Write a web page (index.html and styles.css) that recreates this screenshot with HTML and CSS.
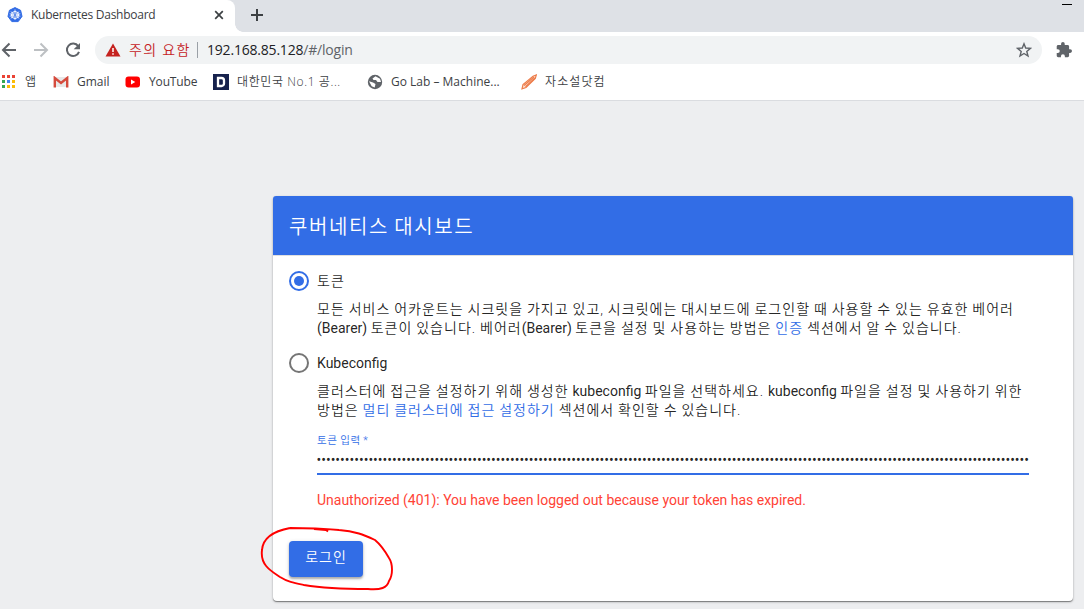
FILE: index.html
```html
<!DOCTYPE html>
<html lang="ko">
<head>
<meta charset="utf-8">
<title>Kubernetes Dashboard</title>
<link rel="stylesheet" href="styles.css">
</head>
<body>
<div class="tabstrip">
  <div class="tab">
    <svg class="tab-icon" width="16" height="16" viewBox="0 0 16 16"><path d="M8 .6 13.6 3.300 15 9.400 11.200 14.600 4.800 14.600 1 9.400 2.400 3.300Z" fill="#326ce5" stroke="#326ce5" stroke-linejoin="round"/><g stroke="#fff" fill="none"><circle cx="8" cy="8" r="3.500" stroke-width="1"/><path stroke-width=".8" d="M8 2.500V13M3.800 4.700l8.400 6.600M12.200 4.700l-8.400 6.600M2.700 9.200l10.600-2.400M2.700 6.800l10.600 2.400"/></g><circle cx="8" cy="8" r="1" fill="#326ce5"/></svg>
    <span class="tab-title">Kubernetes Dashboard</span>
    <svg class="tab-close" width="10" height="10" viewBox="0 0 10 10"><path d="M1.200 1.200l7.600 7.600M8.800 1.200L1.200 8.800" stroke="#3c4043" stroke-width="1.700"/></svg>
  </div>
  <svg class="newtab" width="14" height="14" viewBox="0 0 14 14"><path d="M7 1v12M1 7h12" stroke="#3c4043" stroke-width="2"/></svg>
  <i class="minimize"></i>
</div>
<div class="toolbar">
  <svg class="nav back" width="16" height="16" viewBox="0 0 16 16"><path d="M15 8H2.500M8.500 1.500L2 8l6.500 6.500" fill="none" stroke="#5f6368" stroke-width="2"/></svg>
  <svg class="nav forward" width="16" height="16" viewBox="0 0 16 16"><path d="M1 8h12.500M7.500 1.500L14 8l-6.500 6.500" fill="none" stroke="#bdc0c3" stroke-width="2"/></svg>
  <svg class="nav reload" width="16" height="16" viewBox="0 0 16 16"><path d="M13.200 4.200A6.200 6.200 0 1 0 14 9.800" fill="none" stroke="#5f6368" stroke-width="2"/><path d="M15 1v6.300H8.700Z" fill="#5f6368"/></svg>
  <div class="omnibox">
    <svg width="16" height="14" viewBox="0 0 16 14"><path d="M8 .4 15.500 13.500H.5Z" fill="#c5221f"/><path d="M8 5v4M8 10.200v1.600" stroke="#fff" stroke-width="1.500"/></svg>
    <span class="warning">주의 요함</span>
    <i class="divider"></i>
    <span class="url">192.168.85.128<span class="path">/#/login</span></span>
    <svg class="star" width="16" height="16" viewBox="0 0 16 16"><path d="M8 1.800 9.700 6l4.700.4-3.600 3 1.200 4.600L8 11.500 4 14l1.200-4.600-3.600-3L6.300 6Z" fill="none" stroke="#5f6368" stroke-width="1.400"/></svg>
  </div>
  <svg class="puzzle" width="16" height="16" viewBox="1 1 22 22"><path fill="#5f6368" d="M20.500 11H19V7c0-1.100-.9-2-2-2h-4V3.500a2.500 2.500 0 0 0-5 0V5H4c-1.100 0-2 .9-2 2v3.800h1.500a2.700 2.700 0 0 1 0 5.400H2V20c0 1.100.9 2 2 2h3.800v-1.500a2.700 2.700 0 0 1 5.400 0V22H17c1.100 0 2-.9 2-2v-4h1.500a2.500 2.500 0 0 0 0-5z"/></svg>
</div>
<div class="bookmarks">
  <div class="bookmark apps"><svg width="14" height="14" viewBox="0 0 14 14"><g fill="#ea4335"><path d="M0 0h3v3H0zM5 0h3v3H5zM10 0h3v3h-3z"/></g><path fill="#34a853" d="M0 5h3v3H0zM0 10h3v3H0z"/><path fill="#4285f4" d="M5 5h3v3H5z"/><path fill="#fbbc05" d="M10 5h3v3h-3zM10 10h3v3h-3zM5 10h3v3H5z"/></svg><span>앱</span></div>
  <div class="bookmark gmail"><svg width="16" height="12" viewBox="0 0 16 12"><path d="M1 1h14v10H1z" fill="#e8e8e8"/><path d="M1.800 11.500V2L8 7l6.200-5v9.500" fill="none" stroke="#d54b3d" stroke-width="2.400"/></svg><span>Gmail</span></div>
  <div class="bookmark youtube"><svg width="16" height="12" viewBox="0 0 16 12"><rect x=".5" y=".5" width="14.500" height="11" rx="3" fill="#f00"/><path d="M6 3.500v5L10.300 6z" fill="#fff"/></svg><span>YouTube</span></div>
  <div class="bookmark dc"><svg width="16" height="16" viewBox="0 0 16 16"><path d="M0 0h16v16H0z" fill="#17224d"/><path d="M5 4h3.500a2.500 2.500 0 0 1 2.500 2.500v3a2.500 2.500 0 0 1-2.500 2.500H5z" fill="none" stroke="#fff" stroke-width="2.300"/></svg><span>대한민국 No.1 공...</span></div>
  <div class="bookmark golab"><svg width="16" height="16" viewBox="0 0 16 16"><circle cx="8" cy="8" r="7.200" fill="#5f6368"/><path d="M8.500 2.300 13 4.700 14 8h-3.500L9 6H6.500L5.500 4.500zM2 7.200l4 1.300L8.500 10l-.8 3.600-3-1.300z" fill="#fff"/></svg><span>Go Lab – Machine...</span></div>
  <div class="bookmark jaso"><svg width="16" height="16" viewBox="0 0 16 16"><path d="M1 14.800 2 10.500 12 2.200 15.300 1 14.300 4.500 5 13.500Z" fill="#fce4d8" stroke="#ed7d4b" stroke-width="1.200"/><path d="M3 11.500 13 3M4.500 12.800 14 4" stroke="#ed7d4b" stroke-width="1.200"/></svg><span>자소설닷컴</span></div>
</div>
<main class="page">
  <section class="card">
    <h1 class="card-title">쿠버네티스 대시보드</h1>
    <form class="login">
      <div class="option"><i class="radio selected"></i><span>토큰</span></div>
      <p class="help">모든 서비스 어카운트는 시크릿을 가지고 있고, 시크릿에는 대시보드에 로그인할 때 사용할 수 있는 유효한 베어러<br><span class="latin">(Bearer) </span>토큰이 있습니다. 베어러<span class="latin">(Bearer) </span>토큰을 설정 및 사용하는 방법은 <a>인증</a> 섹션에서 알 수 있습니다.</p>
      <div class="option"><i class="radio"></i><span class="latin">Kubeconfig</span></div>
      <p class="help">클러스터에 접근을 설정하기 위해 생성한 <span class="latin">kubeconfig </span>파일을 선택하세요. <span class="latin">kubeconfig </span>파일을 설정 및 사용하기 위한<br>방법은 <a>멀티 클러스터에 접근 설정하기</a> 섹션에서 확인할 수 있습니다.</p>
      <div class="field">
        <label>토큰 입력 *</label>
        <div class="token">•••••••••••••••••••••••••••••••••••••••••••••••••••••••••••••••••••••••••••••••••••••••••••••••••••••••••••••••••••••••••••••••••••••••••••••••••••••••</div>
      </div>
      <p class="error">Unauthorized (401): You have been logged out because your token has expired.</p>
      <div class="actions">
        <div class="submit">로그인</div>
        <svg class="scribble" width="136" height="68" viewBox="0 0 136 68"><path d="M30 2C14 5 3 11 2 24C0 39 11 45 20 51C28 56 34 57 44 59C62 62 86 63 108 63C121 64 127 62 129 55C133 49 133 38 129 32C125 25 121 19 115 14C104 9 95 5 79 4C62 2.500 48 2 30 2M54 3L66 4L68 5.500" fill="none" stroke="#f00" stroke-width="1.900"/></svg>
      </div>
    </form>
  </section>
</main>
</body>
</html>
```
FILE: styles.css
```css
* { box-sizing: border-box; }
body {
  margin: 0;
  width: 1084px;
  height: 609px;
  overflow: hidden;
  display: flex;
  flex-direction: column;
  background: #edeef0;
  color: #3c4043;
  font: 12px/16px "Open Sans", "Noto Sans CJK KR", sans-serif;
}
svg { display: block; flex: none; }
span { white-space: pre; }

.tabstrip { flex: none; height: 32px; display: flex; align-items: flex-start; background: #dee1e6; }
.tab { position: relative; width: 235px; height: 32px; padding: 0 0 2px 7px; display: flex; align-items: center; background: #fff; border-radius: 0 8px 0 0; }
.tab::after { content: ""; position: absolute; left: 235px; bottom: 0; width: 8px; height: 8px; background: radial-gradient(circle at 100% 0, transparent 7.5px, #fff 8px); }
.tab-title { margin-left: 8px; width: 183px; letter-spacing: -0.26px; }
.newtab { margin: 8px 0 0 15px; }
.minimize { margin: 4px 12px 0 auto; width: 10px; height: 1px; background: #000; }

.toolbar { flex: none; height: 36px; display: flex; align-items: center; background: #fff; }
.back { margin-left: 1px; }
.forward { margin-left: 16px; }
.reload { margin-left: 16px; }
.omnibox { width: 947px; height: 28px; margin-left: 14px; padding: 0 10px; display: flex; align-items: center; background: #f1f3f4; border-radius: 14px; font-size: 14px; }
.warning { margin-left: 8px; width: 61px; color: #c5221f; font-weight: 350; letter-spacing: 1.3px; }
.divider { margin: 0 9px 0 7px; width: 1px; height: 16px; background: #9aa0a6; }
.url { color: #202124; letter-spacing: -0.2px; }
.path { color: #5f6368; }
.star { margin-left: auto; }
.puzzle { margin-left: 14px; }

.bookmarks { flex: none; height: 33px; padding: 0 0 5px 2px; display: flex; align-items: center; background: #fff; border-bottom: 1px solid #dadce0; }
.bookmark { display: flex; align-items: center; }
.apps { width: 51px; gap: 9px; font-weight: 350; }
.gmail { width: 72px; gap: 8px; }
.youtube { width: 88px; gap: 8px; letter-spacing: -0.15px; }
.dc { width: 154px; gap: 8px; letter-spacing: 0.6px; font-weight: 350; }
.golab { width: 154px; gap: 8px; }
.jaso { gap: 8px; letter-spacing: 1.1px; font-weight: 350; }

.page { flex: 1; padding: 95px 11px 0 273px; }
.card { width: 800px; height: 405px; background: #fff; border-radius: 4px; box-shadow: 0 1px 1px rgba(0,0,0,.4), 0 1px 3px rgba(0,0,0,.2); color: rgba(0,0,0,.87); font-family: Roboto, "Noto Sans CJK KR", sans-serif; font-weight: 350; }
.card-title { margin: 0; height: 59px; padding: 0 16px; background: #326de6; border-radius: 3px 3px 0 0; color: #fff; font-size: 20px; font-weight: 350; line-height: 62px; letter-spacing: 1.6px; word-spacing: -1.2px; }
.login { padding: 15px 16px 0; font-size: 14px; line-height: 19px; letter-spacing: 1px; word-spacing: -0.5px; border-top: 1px solid #e0e0e0; }
.option { height: 20px; display: flex; align-items: center; gap: 8px; }
.radio { width: 20px; height: 20px; border: 2px solid #757575; border-radius: 50%; }
.selected { padding: 3px; border-color: #326de6; background: #326de6 content-box; }
.help { height: 38px; margin: 8.5px 0 15.5px 28px; white-space: nowrap; }
.latin { font-weight: 400; letter-spacing: 0; word-spacing: 0; }
.help a { color: #326de6; }
.field { width: 712px; margin-left: 28px; }
.field label { display: block; height: 14px; margin-top: -2px; padding-top: 1px; font-size: 10.5px; line-height: 14px; color: #326de6; letter-spacing: .6px; }
.token { height: 28px; overflow: hidden; border-bottom: 2px solid #326de6; font-weight: 400; line-height: 27px; letter-spacing: -0.005px; white-space: nowrap; text-indent: -0.5px; }
.error { margin: 16px 0 0 28px; color: #ff4336; font-weight: 400; letter-spacing: -0.01px; word-spacing: 0; }
.actions { position: relative; margin-top: 31px; }
.submit { width: 74px; height: 36px; background: #326de6; border-radius: 4px; box-shadow: 0 2px 2px rgba(0,0,0,.25), 0 1px 4px rgba(0,0,0,.15); color: #fff; text-align: center; line-height: 33px; }
.scribble { position: absolute; left: -29px; top: -15px; }
```
